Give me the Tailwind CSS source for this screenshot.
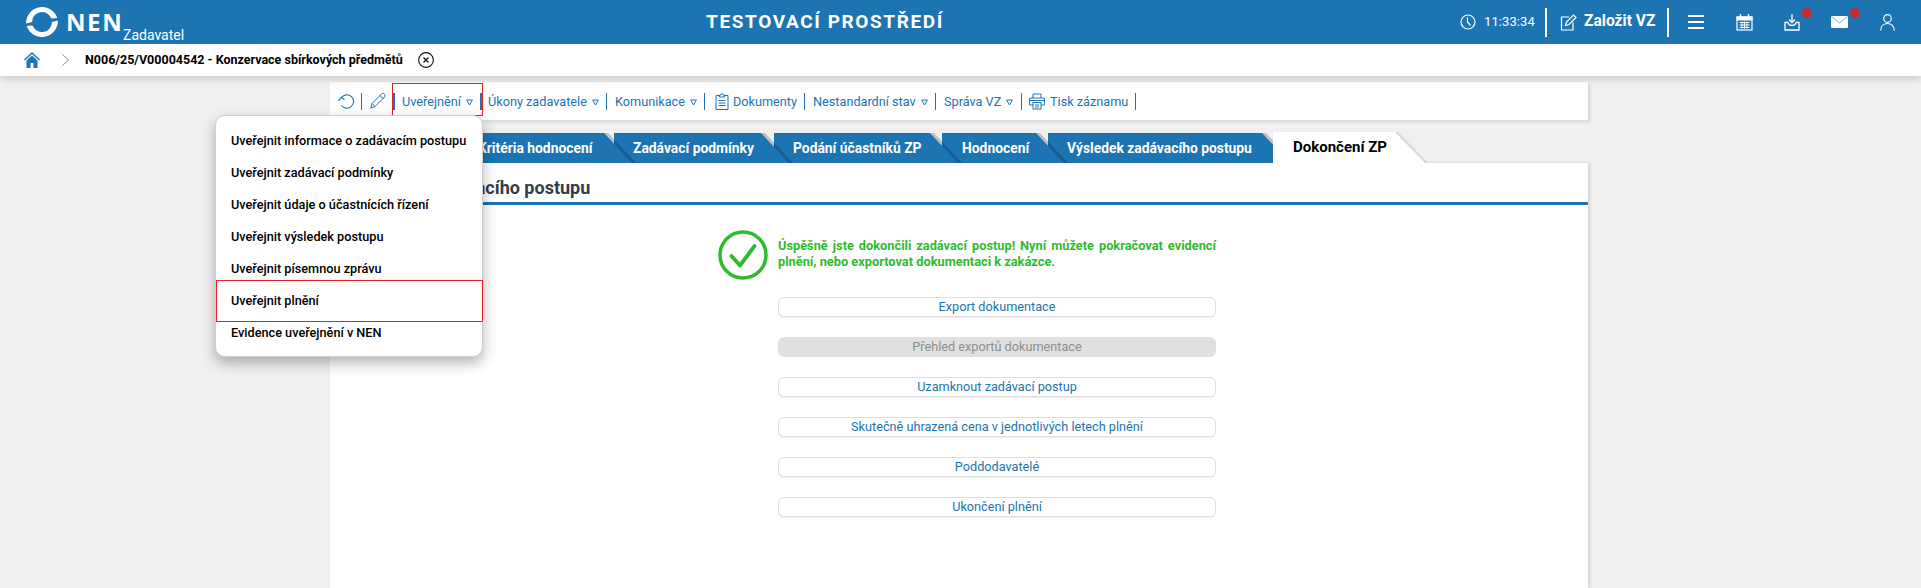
<!DOCTYPE html>
<html lang="cs"><head><meta charset="utf-8"><title>NEN</title>
<script src="https://cdn.jsdelivr.net/npm/@tailwindcss/browser@4"></script></head>
<body class="relative h-[588px] w-[1921px] overflow-hidden bg-[#f0f0f0] font-['Roboto',sans-serif] text-[13px]">
<!-- header -->
<header class="relative z-20 flex h-[44px] items-center bg-[#1c74b3] text-white">
  <div class="flex w-[190px] shrink-0 items-center pl-[26px]">
    <svg width="32" height="32" viewBox="0 0 32 32" fill="#fff"><path d="M.1 17.500A16 16 0 0 1 31.300 12C29 12.300 27 12.600 25.300 12.300A10 10 0 0 0 6 16C4 16.500 2 17 .1 17.500Z"/><path transform="rotate(180 16 16)" d="M.1 17.500A16 16 0 0 1 31.300 12C29 12.300 27 12.600 25.300 12.300A10 10 0 0 0 6 16C4 16.500 2 17 .1 17.500Z"/></svg>
    <span class="ml-[8px] w-[57px] whitespace-nowrap font-['Open_Sans',sans-serif] text-[24px] font-bold leading-none tracking-[1.6px]">NEN</span>
    <span class="mt-[25px] whitespace-nowrap text-[14px] leading-none">Zadavatel</span>
  </div>
  <div class="w-[1270px] shrink-0 whitespace-nowrap text-center text-[19px] font-bold tracking-[1.6px]">TESTOVACÍ PROSTŘEDÍ</div>
  <div class="flex flex-1 items-center">
    <svg width="16" height="16" viewBox="0 0 16 16" fill="none" stroke="#fff" stroke-width="1.2"><circle cx="8" cy="8" r="7"/><path d="M7.500 3.500V8l3 3.500"/></svg>
    <span class="ml-[8px] w-[49px] whitespace-nowrap text-[13px] tracking-[0.1px]">11:33:34</span>
    <span class="ml-[12px] h-[29px] w-[2px] bg-white"></span>
    <svg class="ml-[13px]" width="17" height="17" viewBox="0 0 17 17" fill="none" stroke="#fff" stroke-width="1.200"><path d="M9 3H1.500v13H13V8.500"/><path d="M5.500 11.500l1-3.500L13.500 1l2.500 2.500-7 7z"/></svg>
    <span class="ml-[7px] w-[72px] whitespace-nowrap text-[15.6px] font-bold">Založit VZ</span>
    <span class="ml-[11px] h-[29px] w-[2px] bg-white"></span>
    <svg class="ml-[19px]" width="16" height="14" viewBox="0 0 16 14" fill="#fff"><rect width="16" height="2" y="0"/><rect width="16" height="2" y="6"/><rect width="16" height="2" y="12"/></svg>
    <svg class="ml-[32px]" width="17" height="17" viewBox="0 0 17 17" fill="none" stroke="#fff"><rect x="1" y="3" width="15" height="13" stroke-width="1.200"/><path d="M4.500 0v4M12.500 0v4" stroke-width="1.500"/><rect x="1" y="3" width="15" height="3" fill="#fff"/><path d="M3.500 8.500h10M3.500 11h10M3.500 13.500h10M6 7.500v7M8.500 7.500v7M11 7.500v7" stroke-width="1"/></svg>
    <div class="relative ml-[31px] h-[17px] w-[16px]">
      <svg width="16" height="17" viewBox="0 0 16 17" fill="none" stroke="#fff" stroke-width="1.300"><path d="M8 0v8M5 5.500 8 8.500l3-3"/><path d="M4 8.500H1v7.500h14V8.500h-3c-.5 2-2 3-4 3s-3.500-1-4-3z"/></svg>
      <span class="absolute left-[18px] top-[-6px] h-[10px] w-[10px] rounded-full bg-[#c82a2a]"></span>
    </div>
    <div class="relative ml-[31px] h-[12px] w-[17px]">
      <svg class="block" width="17" height="12" viewBox="0 0 17 12"><rect width="17" height="12" rx="1" fill="#fff"/><path d="M.5.500l8 6.500 8-6.500" fill="none" stroke="#7db5dc" stroke-width="1"/></svg>
      <span class="absolute left-[19px] top-[-8px] h-[10px] w-[10px] rounded-full bg-[#c82a2a]"></span>
    </div>
    <svg class="ml-[32px]" width="15" height="17" viewBox="0 0 15 17" fill="none" stroke="#fff" stroke-width="1.200"><circle cx="7.500" cy="4.500" r="3.800"/><path d="M.7 16.500c0-4.500 3-7 6.800-7s6.800 2.500 6.800 7"/></svg>
  </div>
</header>
<!-- breadcrumb -->
<nav class="relative z-10 flex h-[32px] items-center bg-white shadow-[0_2px_8px_rgba(0,0,0,0.2)]">
  <svg class="ml-[24px]" width="16" height="16" viewBox="0 0 16 16" fill="#1c74b3"><path d="M8 0 0 7.500l1 1L8 2l7 6.500 1-1z"/><path d="M8 3.500 2.500 8.500V16h4v-5h3v5h4V8.500z"/></svg>
  <svg class="ml-[22px]" width="7" height="12" viewBox="0 0 7 12" fill="none" stroke="#8a8a8a"><path d="m.5.500 6 5.500-6 5.500"/></svg>
  <span class="ml-[16px] w-[320px] whitespace-nowrap text-[12.5px] font-bold text-black">N006/25/V00004542 - Konzervace sbírkových předmětů</span>
  <svg class="ml-[13px]" width="16" height="16" viewBox="0 0 16 16" fill="none" stroke="#111"><circle cx="8" cy="8" r="7.400" stroke-width="1.100"/><path d="m5.500 5.500 5 5m0-5-5 5" stroke-width="1.300"/></svg>
</nav>
<!-- content -->
<main class="ml-[330px] mt-[6px] w-[1258px]">
  <div class="flex h-[39px] items-start whitespace-nowrap border-b border-[#dedede] bg-white pl-[8px] pt-[11px] text-[12.7px] text-[#1c74b3] shadow-[2px_1px_3px_rgba(0,0,0,0.12)]">
    <svg class="mt-[1px]" width="17" height="15" viewBox="0 0 17 15" fill="none" stroke="#1c74b3" stroke-width="1.100"><path d="M3.500 3.500A6.700 6.700 0 1 1 3.500 11.500"/><path d="M.5 6.800 3.300 3.300 6.500 5.500"/></svg>
    <span class="ml-[6px] h-[17px] w-px bg-[#1c74b3]"></span>
    <svg class="ml-[8px]" width="16" height="16" viewBox="0 0 16 16" fill="none" stroke="#1c74b3"><path d="M.8 15.200 2 10.500 11.500 1c1-1 2.500-.6 3 0s.8 2 0 3L5 13.500z"/><path d="M2 10.500 5 13.500M10 2.500 13.500 6"/></svg>
    <span class="ml-[7px] h-[17px] w-[2px] bg-[#1c74b3]"></span>
    <span class="ml-[7px] w-[59px] leading-[18px]">Uveřejnění</span><svg class="ml-[5px] mt-[6px]" width="7" height="7" viewBox="0 0 7 7" fill="none" stroke="#1c74b3"><path d="M.6 1h5.800L3.500 6z"/></svg>
    <span class="ml-[7px] h-[17px] w-[2px] bg-[#1c74b3]"></span>
    <span class="ml-[6px] w-[99px] leading-[18px]">Úkony zadavatele</span><svg class="ml-[5px] mt-[6px]" width="7" height="7" viewBox="0 0 7 7" fill="none" stroke="#1c74b3"><path d="M.6 1h5.800L3.500 6z"/></svg>
    <span class="ml-[7px] h-[17px] w-px bg-[#1c74b3]"></span>
    <span class="ml-[8px] w-[70px] leading-[18px]">Komunikace</span><svg class="ml-[5px] mt-[6px]" width="7" height="7" viewBox="0 0 7 7" fill="none" stroke="#1c74b3"><path d="M.6 1h5.800L3.500 6z"/></svg>
    <span class="ml-[7px] h-[17px] w-px bg-[#1c74b3]"></span>
    <svg class="ml-[10px]" width="14" height="17" viewBox="0 0 14 17" fill="none" stroke="#1c74b3"><path d="M4.500 2.500H1v14h12v-14H9.500"/><path d="M4.500 4V2h1.500c0-2 2-2 2 0h1.500v2z"/><path d="M3.500 7.500h7M3.500 10h7M3.500 12.500h7"/></svg>
    <span class="ml-[4px] w-[64px] leading-[18px]">Dokumenty</span>
    <span class="ml-[7px] h-[17px] w-px bg-[#1c74b3]"></span>
    <span class="ml-[8px] w-[103px] leading-[18px]">Nestandardní stav</span><svg class="ml-[5px] mt-[6px]" width="7" height="7" viewBox="0 0 7 7" fill="none" stroke="#1c74b3"><path d="M.6 1h5.800L3.500 6z"/></svg>
    <span class="ml-[7px] h-[17px] w-px bg-[#1c74b3]"></span>
    <span class="ml-[8px] w-[57px] leading-[18px]">Správa VZ</span><svg class="ml-[5px] mt-[6px]" width="7" height="7" viewBox="0 0 7 7" fill="none" stroke="#1c74b3"><path d="M.6 1h5.800L3.500 6z"/></svg>
    <span class="ml-[8px] h-[17px] w-px bg-[#1c74b3]"></span>
    <svg class="ml-[7px]" width="16" height="17" viewBox="0 0 16 17" fill="none" stroke="#1c74b3"><path d="M4 5V1h8v4M4 12H.6V5h14.800v7H12"/><rect x="4" y="9.500" width="8" height="6.500"/><path d="M.6 7.500h14.800M6 12h4M6 14h4"/></svg>
    <span class="ml-[5px] w-[77px] leading-[18px]">Tisk záznamu</span>
    <span class="ml-[8px] h-[17px] w-px bg-[#1c74b3]"></span>
  </div>
  <!-- tabs -->
  <div class="flex h-[42px] items-end whitespace-nowrap pl-[10px] text-[13.85px] font-bold text-white">
    <div class="relative z-[6] -mr-[18px] h-[30px] w-[292px] pl-[138px] leading-[31px]"><span class="absolute inset-0 translate-x-[4px] bg-black/20 [clip-path:polygon(0_0,calc(100%-28px)_0,100%_100%,0_100%)]"></span><span class="absolute inset-0 bg-[#1c74b3] [clip-path:polygon(0_0,calc(100%-28px)_0,100%_100%,0_100%)]"></span><span class="relative">Kritéria hodnocení</span></div>
    <div class="relative z-[5] -mr-[15px] h-[30px] w-[175px] pl-[19px] leading-[31px]"><span class="absolute inset-0 translate-x-[4px] bg-black/20 [clip-path:polygon(0_0,calc(100%-28px)_0,100%_100%,0_100%)]"></span><span class="absolute inset-0 bg-[#1c74b3] [clip-path:polygon(0_0,calc(100%-28px)_0,100%_100%,0_100%)]"></span><span class="relative">Zadávací podmínky</span></div>
    <div class="relative z-[4] -mr-[16px] h-[30px] w-[184px] pl-[19px] leading-[31px]"><span class="absolute inset-0 translate-x-[4px] bg-black/20 [clip-path:polygon(0_0,calc(100%-28px)_0,100%_100%,0_100%)]"></span><span class="absolute inset-0 bg-[#1c74b3] [clip-path:polygon(0_0,calc(100%-28px)_0,100%_100%,0_100%)]"></span><span class="relative">Podání účastníků ZP</span></div>
    <div class="relative z-[3] -mr-[16px] h-[30px] w-[122px] pl-[20px] leading-[31px]"><span class="absolute inset-0 translate-x-[4px] bg-black/20 [clip-path:polygon(0_0,calc(100%-28px)_0,100%_100%,0_100%)]"></span><span class="absolute inset-0 bg-[#1c74b3] [clip-path:polygon(0_0,calc(100%-28px)_0,100%_100%,0_100%)]"></span><span class="relative">Hodnocení</span></div>
    <div class="relative z-[2] -mr-[17px] h-[30px] w-[242px] pl-[19px] leading-[31px]"><span class="absolute inset-0 translate-x-[4px] bg-black/20 [clip-path:polygon(0_0,calc(100%-28px)_0,100%_100%,0_100%)]"></span><span class="absolute inset-0 bg-[#1c74b3] [clip-path:polygon(0_0,calc(100%-28px)_0,100%_100%,0_100%)]"></span><span class="relative">Výsledek zadávacího postupu</span></div>
    <div class="relative z-[7] h-[31px] w-[152px] pl-[20px] text-[15px] leading-[31px] text-black"><span class="absolute inset-0 translate-x-[3px] bg-black/10 [clip-path:polygon(0_0,calc(100%-30px)_0,100%_100%,0_100%)]"></span><span class="absolute inset-0 bg-white [clip-path:polygon(0_0,calc(100%-30px)_0,100%_100%,0_100%)]"></span><span class="relative">Dokončení ZP</span></div>
  </div>
  <!-- panel -->
  <section class="h-[425px] bg-white shadow-[2px_0_3px_rgba(0,0,0,0.12)]">
    <h2 class="h-[42px] border-b-[3px] border-[#1c74b3] pl-[8px] pt-[14px] text-[18px] font-bold leading-[22px] text-[#333d47]">Dokončení zadávacího postupu</h2>
    <div class="ml-[448px] w-[438px] pt-[33px]">
      <div class="relative h-[32px]">
        <svg class="absolute left-[-60px] top-[-8px]" width="50" height="50" viewBox="0 0 50 50" fill="none" stroke="#2fbb2f"><circle cx="25" cy="25" r="23" stroke-width="3.500"/><path d="m13.500 26 8.500 9.500L36.500 16" stroke-width="3.800" stroke-linecap="round" stroke-linejoin="round"/></svg>
        <p class="text-justify text-[12.8px] font-bold leading-[16px] text-[#2fbb2f]">Úspěšně jste dokončili zadávací postup! Nyní můžete pokračovat evidencí plnění, nebo exportovat dokumentaci k zakázce.</p>
      </div>
      <div class="mt-[27px] flex flex-col gap-[20px] text-center text-[12.7px] leading-[18px] text-[#1c74b3]">
        <div class="h-[20px] rounded-[6px] border border-[#e0e0e0] bg-white shadow-[0_1px_1px_rgba(0,0,0,0.08)]">Export dokumentace</div>
        <div class="h-[20px] rounded-[6px] border border-[#e0e0e0] bg-[#e0e0e0] text-[#8e8e8e]">Přehled exportů dokumentace</div>
        <div class="h-[20px] rounded-[6px] border border-[#e0e0e0] bg-white shadow-[0_1px_1px_rgba(0,0,0,0.08)]">Uzamknout zadávací postup</div>
        <div class="h-[20px] rounded-[6px] border border-[#e0e0e0] bg-white shadow-[0_1px_1px_rgba(0,0,0,0.08)]">Skutečně uhrazená cena v jednotlivých letech plnění</div>
        <div class="h-[20px] rounded-[6px] border border-[#e0e0e0] bg-white shadow-[0_1px_1px_rgba(0,0,0,0.08)]">Poddodavatelé</div>
        <div class="h-[20px] rounded-[6px] border border-[#e0e0e0] bg-white shadow-[0_1px_1px_rgba(0,0,0,0.08)]">Ukončení plnění</div>
      </div>
    </div>
  </section>
</main>
<!-- dropdown -->
<div class="absolute left-[392px] top-[83px] z-30 h-[33px] w-[91px] border border-[#e8202c]"></div>
<div class="absolute left-[215px] top-[115px] z-30 h-[242px] w-[268px] rounded-[10px] border border-[#cfcfcf] bg-white pl-[15px] pt-[9px] text-[12.7px] font-medium leading-[32px] text-black shadow-[0_6px_14px_rgba(0,0,0,0.3)]">
  <div>Uveřejnit informace o zadávacím postupu</div>
  <div>Uveřejnit zadávací podmínky</div>
  <div>Uveřejnit údaje o účastnících řízení</div>
  <div>Uveřejnit výsledek postupu</div>
  <div>Uveřejnit písemnou zprávu</div>
  <div>Uveřejnit plnění</div>
  <div>Evidence uveřejnění v NEN</div>
  <div class="absolute left-0 top-[164px] h-[42px] w-[267px] border border-[#e8202c]"></div>
</div>
</body></html>
